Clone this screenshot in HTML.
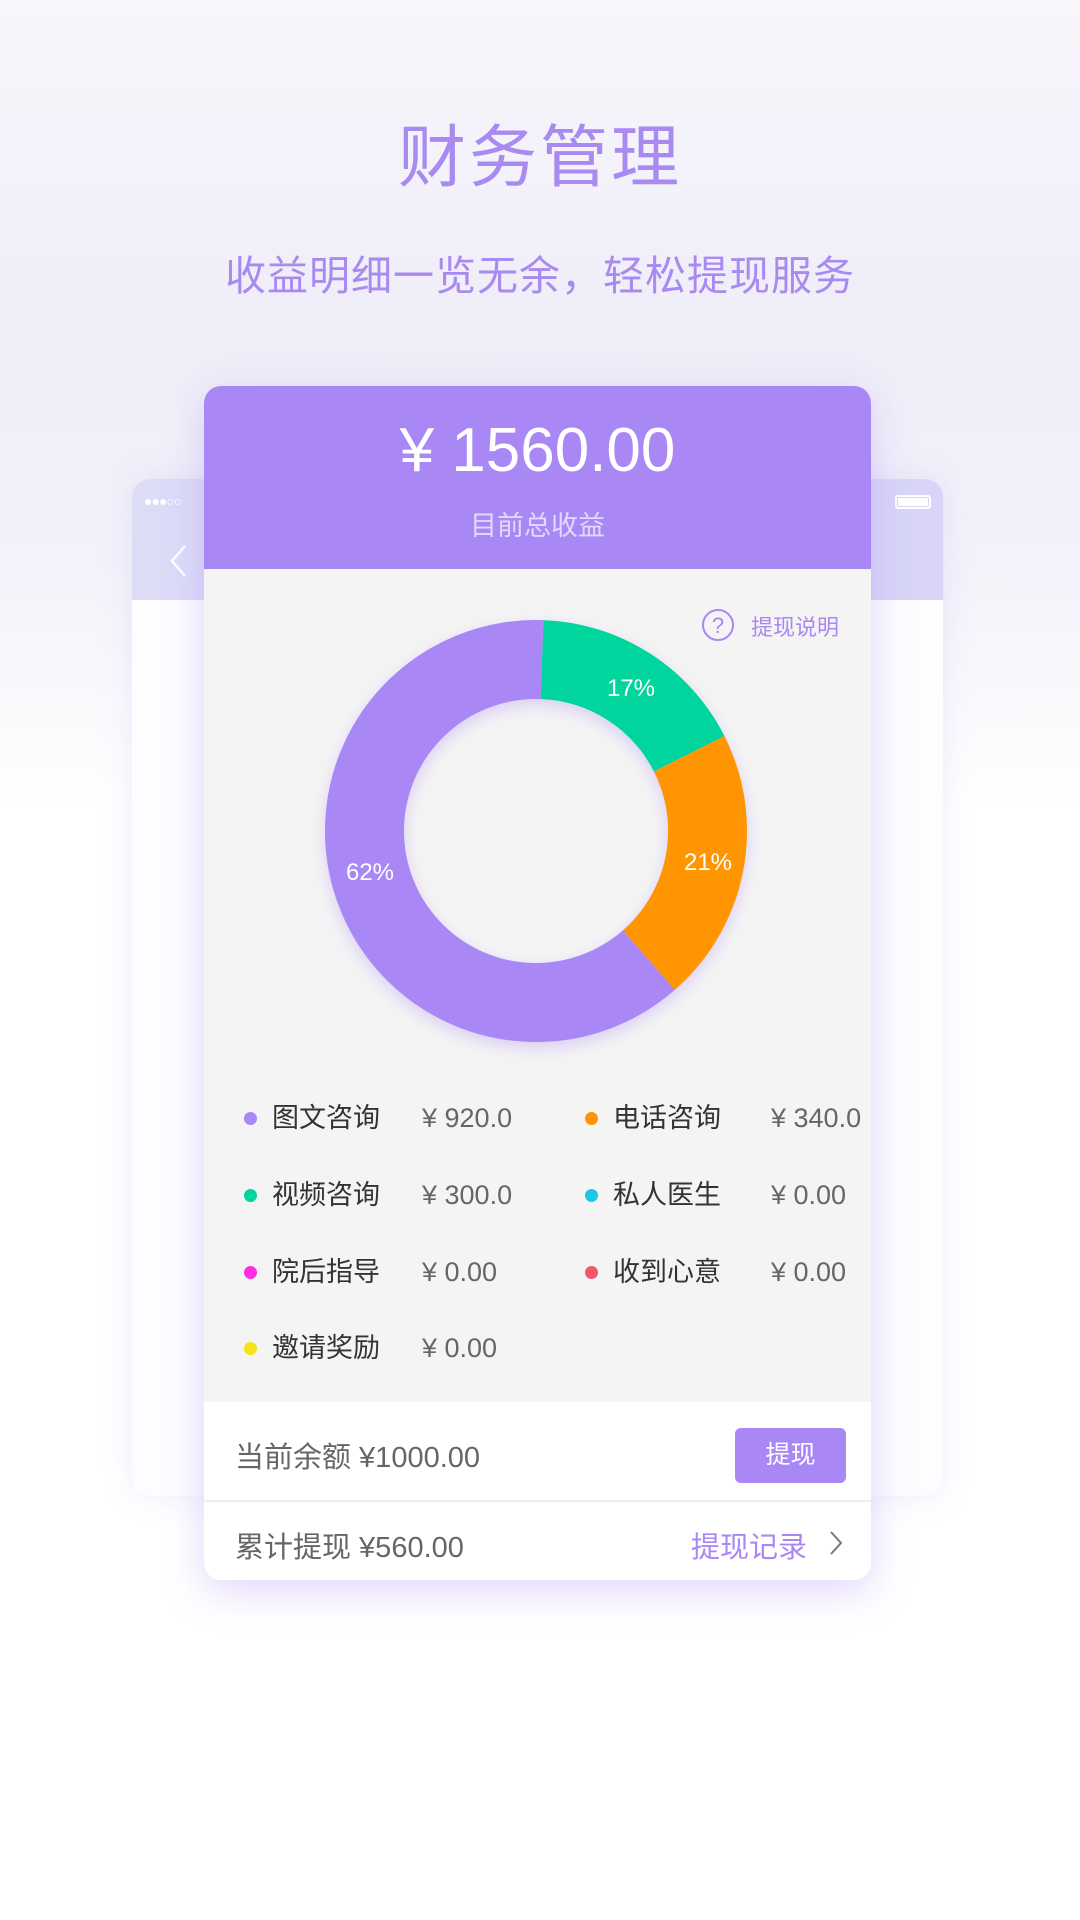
<!DOCTYPE html>
<html><head><meta charset="utf-8"><style>
*{margin:0;padding:0;box-sizing:border-box}
body{width:1080px;height:1920px;position:relative;overflow:hidden;background:#fff;font-family:"Liberation Sans","Noto Sans CJK SC",sans-serif}
.bg{position:absolute;left:0;top:0;width:1080px;height:810px;background:linear-gradient(180deg,#f8f6fb 0%,#efedf8 40%,#f3f2fa 70%,#ffffff 100%)}
.t{position:absolute;width:1080px;text-align:center;color:#a98af0}
.back{position:absolute;left:132px;top:479px;width:811px;height:1017px;border-radius:18px;background:#fdfdff;box-shadow:0 0 30px rgba(180,160,240,.2);overflow:hidden}
.back .hd{height:121px;background:linear-gradient(90deg,#dcdcf7,#d8d5f8)}
.card{position:absolute;left:204px;top:386px;width:667px;height:1194px;border-radius:17px;overflow:hidden;background:#fff;box-shadow:0 10px 40px rgba(169,135,245,.35)}
.top{height:183px;background:#a987f5;color:#fff;text-align:center}
.body{height:833px;background:#f4f4f4;position:relative}
.lg{position:absolute;font-size:27px;color:#333}
.lg span{position:absolute;top:-18px;height:36px;line-height:36px;white-space:nowrap}
.dot{position:absolute;width:13px;height:13px;border-radius:50%;top:-6px}
.am{color:#666}
.row{position:absolute;left:0;width:667px;font-size:29px;color:#666}
</style></head><body>
<div class="bg"></div>
<div class="t" style="top:112px;font-size:68px;letter-spacing:3px;line-height:92px">财务管理</div>
<div class="t" style="top:250px;font-size:41px;letter-spacing:1px;line-height:52px">收益明细一览无余，轻松提现服务</div>
<div class="back"><div class="hd">
<div style="position:absolute;left:12px;top:14px;color:#fff;font-size:14px;letter-spacing:-1px">●●●○○</div>
<svg style="position:absolute;left:36px;top:64px" width="20" height="36"><path d="M17 3 L4 18 L17 33" stroke="#fff" stroke-width="2.5" fill="none"/></svg>
<div style="position:absolute;right:12px;top:16px;width:36px;height:14px;border:2px solid #fff;border-radius:3px;padding:1px"><div style="background:#fff;height:100%"></div></div>
</div></div>
<div class="card">
<div class="top"><div style="padding-top:30px;font-size:62px;line-height:70px">¥ 1560.00</div><div style="margin-top:18px;font-size:27px;color:#e3d8fb">目前总收益</div></div>
<div class="body">
<svg style="position:absolute;left:496px;top:38px" width="36" height="36"><circle cx="18" cy="18" r="15" fill="none" stroke="#a987f5" stroke-width="2"/><text x="18" y="26" text-anchor="middle" font-size="22" fill="#a987f5" font-family="Liberation Sans">?</text></svg>
<div style="position:absolute;left:547px;top:41px;font-size:22px;color:#a987f5">提现说明</div>
<svg style="position:absolute;left:0;top:0" width="667" height="520">
<defs><filter id="s" x="-20%" y="-20%" width="140%" height="140%"><feDropShadow dx="0" dy="6" stdDeviation="8" flood-color="#a987f5" flood-opacity=".35"/></filter></defs>
<g filter="url(#s)">
<g transform="rotate(-88 332 262)" fill="none" stroke-width="79">
<circle cx="332" cy="262" r="171.5" stroke="#00d59e" stroke-dasharray="183.2 2000"/>
<circle cx="332" cy="262" r="171.5" stroke="#ff9500" stroke-dasharray="0 183.2 226.3 2000"/>
<circle cx="332" cy="262" r="171.5" stroke="#a987f5" stroke-dasharray="0 409.5 668.2 2000"/>
</g></g>
<g fill="#fff" font-size="24" font-family="Liberation Sans" text-anchor="middle">
<text x="427" y="127">17%</text><text x="504" y="301">21%</text><text x="166" y="311">62%</text></g>
</svg>
<div class="lg" style="left:40px;top:549px"><i class="dot" style="background:#a987f5"></i><span style="left:28px">图文咨询</span><span class="am" style="left:178px">¥ 920.0</span></div>
<div class="lg" style="left:381px;top:549px"><i class="dot" style="background:#ff9500"></i><span style="left:28px">电话咨询</span><span class="am" style="left:186px">¥ 340.0</span></div>
<div class="lg" style="left:40px;top:626px"><i class="dot" style="background:#00d59e"></i><span style="left:28px">视频咨询</span><span class="am" style="left:178px">¥ 300.0</span></div>
<div class="lg" style="left:381px;top:626px"><i class="dot" style="background:#1ec8e0"></i><span style="left:28px">私人医生</span><span class="am" style="left:186px">¥ 0.00</span></div>
<div class="lg" style="left:40px;top:703px"><i class="dot" style="background:#ff2fe0"></i><span style="left:28px">院后指导</span><span class="am" style="left:178px">¥ 0.00</span></div>
<div class="lg" style="left:381px;top:703px"><i class="dot" style="background:#f5566e"></i><span style="left:28px">收到心意</span><span class="am" style="left:186px">¥ 0.00</span></div>
<div class="lg" style="left:40px;top:779px"><i class="dot" style="background:#f5e218"></i><span style="left:28px">邀请奖励</span><span class="am" style="left:178px">¥ 0.00</span></div>
</div>
<div class="row" style="top:1016px;height:100px;border-bottom:2px solid #eee"><div style="position:absolute;left:31px;top:32px">当前余额 ¥1000.00</div>
<div style="position:absolute;left:531px;top:26px;width:111px;height:55px;border-radius:6px;background:#a987f5;color:#fff;font-size:25px;text-align:center;line-height:55px">提现</div></div>
<div class="row" style="top:1118px;height:76px"><div style="position:absolute;left:31px;top:20px">累计提现 ¥560.00</div>
<div style="position:absolute;right:64px;top:20px;color:#a987f5">提现记录</div>
<svg style="position:absolute;left:624px;top:25px" width="16" height="28"><path d="M3 3 L13 14 L3 25" stroke="#777" stroke-width="2" fill="none"/></svg></div>
</div>
</body></html>
